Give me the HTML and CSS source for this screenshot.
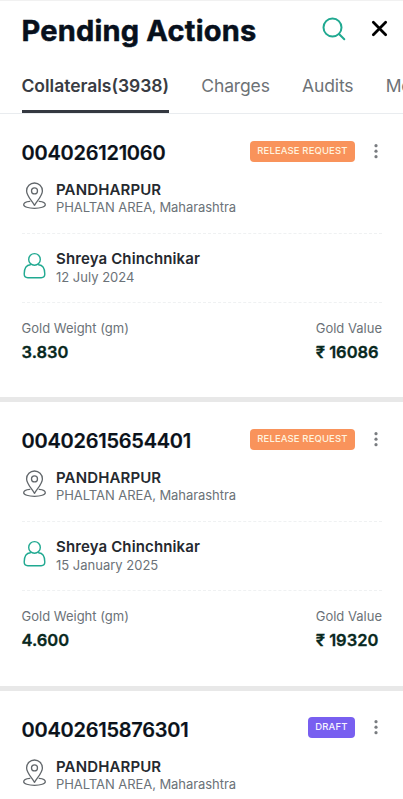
FILE: index.html
```html
<!DOCTYPE html>
<html lang="en">
<head>
<meta charset="utf-8">
<title>Pending Actions</title>
<link rel="stylesheet" href="styles.css">
</head>
<body>
<svg class="sprite" aria-hidden="true">
  <symbol id="pin" viewBox="0 0 24 28"><path d="M12.5 23.3C10 19 4.6 13.7 4.6 8.9a7.9 7.9 0 0 1 15.8 0C20.4 13.7 15 19 12.5 23.3Z"/><circle cx="12.5" cy="8.9" r="3"/><path d="M7.8 19.4C4.1 19.7 1.7 21 1.7 22.7c0 2 4.6 3.6 10.8 3.6s10.8-1.6 10.8-3.6c0-1.7-2.4-3-6.1-3.3"/></symbol>
  <symbol id="user" viewBox="0 0 24 28"><circle cx="12.5" cy="7.4" r="5.8"/><path d="M8.4 12.7C4.2 13 2.2 17 2.2 22c0 2.3 1.2 3.7 3.6 3.7h13.4c2.4 0 3.6-1.4 3.6-3.7 0-5-2-9-6.2-9.3"/></symbol>
  <symbol id="more" viewBox="0 0 6 18"><circle cx="3" cy="2.7" r="1.6"/><circle cx="3" cy="8.2" r="1.6"/><circle cx="3" cy="13.7" r="1.6"/></symbol>
</svg>
<header class="header">
  <h1 class="title">Pending Actions</h1>
  <svg class="search" viewBox="0 0 24 24"><circle cx="10.5" cy="10.5" r="9"/><path d="m17 17 5.3 5.3"/></svg>
  <svg class="close" viewBox="0 0 16 16"><path d="m2.2 2.2 11.6 11.6M13.8 2.2 2.2 13.8"/></svg>
</header>
<nav class="tabs">
  <span class="tab active">Collaterals(3938)</span>
  <span class="tab">Charges</span>
  <span class="tab">Audits</span>
  <span class="tab">More</span>
</nav>
<main>
  <article class="card">
    <div class="top"><h2 class="number">004026121060</h2><span class="badge">RELEASE REQUEST</span><svg class="more"><use href="#more"/></svg></div>
    <div class="info place"><svg class="icon"><use href="#pin"/></svg><div><div class="name">PANDHARPUR</div><div class="sub area">PHALTAN AREA, Maharashtra</div></div></div>
    <div class="info person"><svg class="icon teal"><use href="#user"/></svg><div><div class="name">Shreya Chinchnikar</div><div class="sub">12 July 2024</div></div></div>
    <div class="gold"><div><div class="label">Gold Weight (gm)</div><div class="value">3.830</div></div><div><div class="label">Gold Value</div><div class="value">₹ 16086</div></div></div>
  </article>
  <article class="card">
    <div class="top"><h2 class="number">00402615654401</h2><span class="badge">RELEASE REQUEST</span><svg class="more"><use href="#more"/></svg></div>
    <div class="info place"><svg class="icon"><use href="#pin"/></svg><div><div class="name">PANDHARPUR</div><div class="sub area">PHALTAN AREA, Maharashtra</div></div></div>
    <div class="info person"><svg class="icon teal"><use href="#user"/></svg><div><div class="name">Shreya Chinchnikar</div><div class="sub">15 January 2025</div></div></div>
    <div class="gold"><div><div class="label">Gold Weight (gm)</div><div class="value">4.600</div></div><div><div class="label">Gold Value</div><div class="value">₹ 19320</div></div></div>
  </article>
  <article class="card last">
    <div class="top"><h2 class="number">00402615876301</h2><span class="badge draft">DRAFT</span><svg class="more"><use href="#more"/></svg></div>
    <div class="info place"><svg class="icon"><use href="#pin"/></svg><div><div class="name">PANDHARPUR</div><div class="sub area">PHALTAN AREA, Maharashtra</div></div></div>
  </article>
</main>
</body>
</html>
```
FILE: styles.css
```css
* { box-sizing: border-box; }
html, body { height: 100%; overflow: hidden; }
body { margin: 0; background: #fff; color: #101820; font-family: Inter, sans-serif; white-space: nowrap; }
.sprite { display: none; }
svg { fill: none; stroke: currentColor; stroke-linecap: round; stroke-linejoin: round; flex: none; }
.header { display: flex; align-items: center; height: 59px; padding: 0 15px 2px 21.5px; border-top: 1px solid #f1f1f1; }
.title { margin: 3px auto 0 0; font-size: 29px; line-height: 36px; font-weight: 700; letter-spacing: .2px; color: #07101c; -webkit-text-stroke: .5px #07101c; }
.search { width: 24px; height: 24px; margin: -1px 25px 0 0; color: #20a991; stroke-width: 2; }
.close { width: 17px; height: 17px; margin-top: -1px; color: #000; stroke-width: 2.6; }
.tabs { display: flex; gap: 32.3px; height: 55px; padding-left: 21.5px; border-bottom: 1px solid #e9ecef; font-size: 17.5px; letter-spacing: -.14px; color: #6d7276; overflow: hidden; }
.tab { flex: none; height: 54px; line-height: 54px; }
.active { letter-spacing: -.02px; border-bottom: 3px solid #343840; font-weight: 600; color: #393c43; }
.card { height: 288.4px; padding: 24px 21px 0 21.5px; border-bottom: 5px solid #e8e8e8; }
.last { height: 108px; border: 0; overflow: hidden; }
.top { display: flex; align-items: center; height: 30px; }
.number { margin: 0 auto 0 0; font-size: 20px; line-height: 30px; font-weight: 600; letter-spacing: -.24px; color: #0b121a; -webkit-text-stroke: .2px #0b121a; }
.badge { height: 21px; padding: 0 7.5px; border-radius: 4px; background: #f9935b; color: #fff3df; font-size: 9.5px; line-height: 20px; font-weight: 500; letter-spacing: .12px; margin-bottom: 4px; }
.draft { background: #785ff0; color: #f6f3ff; }
.more { width: 6px; height: 18px; margin: 0 3px 3px 18px; color: #797c80; fill: currentColor; stroke: none; }
.info { display: flex; gap: 10.5px; border-bottom: 1px dashed #eff1f2; }
.place { height: 66px; padding-top: 13px; }
.person { height: 69px; padding-top: 16px; }
.icon { width: 24px; height: 28px; margin-top: 1px; color: #62676b; stroke-width: 1.3; }
.teal { color: #20a991; stroke-width: 1.4; }
.person .icon { margin-top: 2px; }
.name { font-size: 15px; line-height: 18px; font-weight: 600; letter-spacing: .13px; color: #25292f; }
.sub { font-size: 13px; line-height: 17px; color: #6b7278; }
.person .sub { line-height: 18px; }
.area { letter-spacing: -.06px; }
.gold { display: flex; justify-content: space-between; padding-top: 15px; }
.label { font-size: 13px; line-height: 20px; color: #6b7278; }
.value { font-size: 16.5px; line-height: 28px; font-weight: 600; color: #082820; -webkit-text-stroke: .3px #082820; }
```
